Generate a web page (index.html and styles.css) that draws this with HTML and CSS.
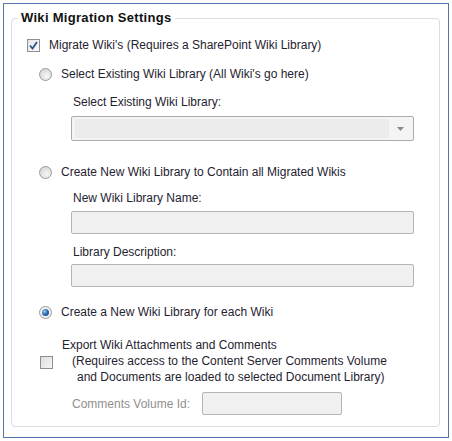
FILE: index.html
```html
<!DOCTYPE html>
<html>
<head>
<meta charset="utf-8">
<link rel="stylesheet" href="styles.css">
</head>
<body>
<div class="frame">
  <fieldset class="group">
    <legend class="group-title">Wiki Migration Settings</legend>

    <div class="row row-check">
      <span class="chk chk-on">
        <svg width="9" height="9" viewBox="0 0 9 9"><path d="M1 4.5 L3.5 7.5 L8 1" fill="none" stroke="#31508f" stroke-width="1.8"/></svg>
      </span>
      <span class="txt">Migrate Wiki's (Requires a SharePoint Wiki Library)</span>
    </div>

    <div class="row row-radio r1">
      <span class="radio"></span>
      <span class="txt">Select Existing Wiki Library (All Wiki's go here)</span>
    </div>
    <div class="label l1">Select Existing Wiki Library:</div>
    <div class="combo">
      <span class="combo-field"></span>
      <span class="combo-btn"><svg width="7" height="4" viewBox="0 0 7 4"><path d="M0 0 H7 L3.5 4 Z" fill="#8a8a8a"/></svg></span>
    </div>

    <div class="row row-radio r2">
      <span class="radio"></span>
      <span class="txt">Create New Wiki Library to Contain all Migrated Wikis</span>
    </div>
    <div class="label l2">New Wiki Library Name:</div>
    <div class="textbox tb1"></div>
    <div class="label l3">Library Description:</div>
    <div class="textbox tb2"></div>

    <div class="row row-radio r3">
      <span class="radio radio-on"><span class="dot"></span></span>
      <span class="txt">Create a New Wiki Library for each Wiki</span>
    </div>

    <div class="export">
      <span class="chk chk-off"></span>
      <div class="export-text">
        <div class="el el1">Export Wiki Attachments and Comments</div>
        <div class="el el2">(Requires access to the Content Server Comments Volume</div>
        <div class="el el3">and Documents are loaded to selected Document Library)</div>
      </div>
    </div>

    <div class="comments">
      <span class="label-dim">Comments Volume Id:</span>
      <span class="textbox tb-small"></span>
    </div>
  </fieldset>
</div>
</body>
</html>
```
FILE: styles.css
```css
html, body {
  margin: 0;
  padding: 0;
  background: #ffffff;
}
body {
  font-family: "Liberation Sans", Arial, sans-serif;
  font-size: 12px;
  color: #1f2330;
  width: 452px;
  height: 441px;
  overflow: hidden;
}
.frame {
  margin: 3px 0 0 3px;
  width: 446px;
  height: 435px;
  border: 1px solid #5274ab;
  box-sizing: border-box;
  padding: 0 0 0 7px;
}
.group {
  margin: 6px 0 0 0;
  padding: 0 0 0 0;
  width: 429px;
  height: 417px;
  box-sizing: border-box;
  border: 1px solid #d6dee6;
  border-radius: 4px;
  display: flex;
  flex-direction: column;
  align-items: flex-start;
}
.group-title {
  margin-left: 6px;
  padding: 0 3px;
  font-weight: bold;
  font-size: 13px;
  letter-spacing: 0.3px;
  line-height: 16px;
  color: #111111;
}
.row {
  display: flex;
  align-items: center;
  height: 16px;
  line-height: 16px;
}
.row-check {
  margin-top: 11px;
  padding-left: 15px;
}
.row-check .txt { margin-left: 9px; }
.row-radio { padding-left: 27px; }
.row-radio .txt { margin-left: 9px; }
.r1 { margin-top: 13px; }
.r2 { margin-top: 23px; }
.r3 { margin-top: 17px; }

.chk {
  width: 13px;
  height: 13px;
  box-sizing: border-box;
  border: 1px solid #8e8f8f;
  background: linear-gradient(135deg, #dcdcdc 0%, #f6f6f6 100%);
  display: flex;
  align-items: center;
  justify-content: center;
  flex: none;
}
.chk-on {
  background: linear-gradient(135deg, #e6e6e6 0%, #fbfbfb 100%);
}
.radio {
  width: 13px;
  height: 13px;
  box-sizing: border-box;
  border-radius: 50%;
  border: 1px solid #9a9a9a;
  background: radial-gradient(circle at 60% 65%, #f7f7f7 0%, #d9d9d9 70%, #cfcfcf 100%);
  display: flex;
  align-items: center;
  justify-content: center;
  flex: none;
}
.radio-on {
  background: radial-gradient(circle at 50% 50%, #ffffff 0%, #e8e8e8 100%);
}
.dot {
  width: 7px;
  height: 7px;
  border-radius: 50%;
  background: radial-gradient(circle at 35% 35%, #9fd0f5 0%, #2c6fb2 45%, #123e72 100%);
}

.label {
  padding-left: 61px;
  height: 16px;
  line-height: 16px;
}
.l1 { margin-top: 12px; }
.l2 { margin-top: 10px; }
.l3 { margin-top: 10px; }

.combo {
  margin: 6px 0 0 59px;
  width: 343px;
  height: 25px;
  box-sizing: border-box;
  border: 1px solid #acacac;
  border-radius: 2px;
  background: #f4f4f4;
  display: flex;
  padding: 2px 2px 2px 3px;
}
.combo-field {
  flex: 1;
  background: #ececec;
}
.combo-btn {
  width: 22px;
  display: flex;
  align-items: center;
  justify-content: center;
}
.textbox {
  width: 343px;
  height: 23px;
  box-sizing: border-box;
  border: 1px solid #b4b4b4;
  border-radius: 2px;
  background: #f0f0f0;
  margin-left: 59px;
}
.tb1 { margin-top: 5px; }
.tb2 { margin-top: 4px; }

.export {
  margin-top: 17px;
  display: flex;
  align-items: center;
  padding-left: 28px;
}
.export .chk { margin-top: 2px; }
.export-text {
  margin-left: 9px;
  line-height: 16px;
}
.el2 { padding-left: 10px; }
.el3 { padding-left: 15px; }

.comments {
  margin-top: 7px;
  display: flex;
  align-items: center;
  padding-left: 60px;
}
.label-dim {
  color: #8f8f8f;
  width: 130px;
}
.tb-small {
  margin-left: 0;
  width: 140px;
  height: 23px;
  display: block;
}
```
